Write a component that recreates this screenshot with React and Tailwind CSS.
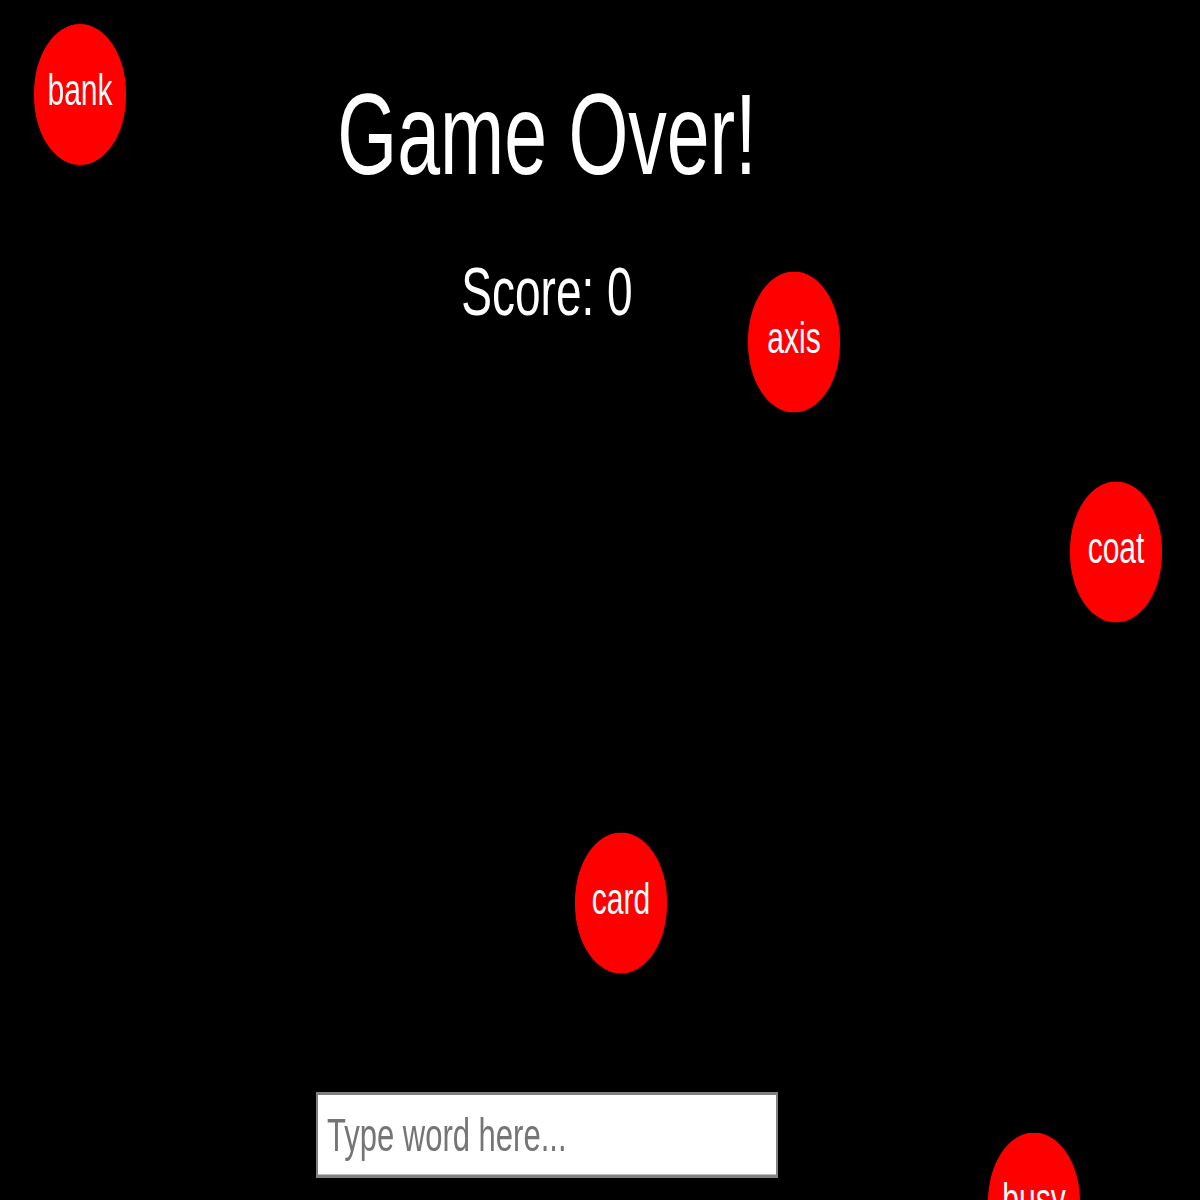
import React from "react";

const bubbles = [
  { word: "bank", cls: "left-[34px] top-[16px]" },
  { word: "axis", cls: "left-[748px] top-[181px]" },
  { word: "coat", cls: "left-[1070px] top-[321px]" },
  { word: "card", cls: "left-[575px] top-[555px]" },
  { word: "busy", cls: "left-[988px] top-[755px]" },
];

export default function App() {
  return (
    <div className="w-[1200px] h-[1200px] overflow-hidden bg-black font-['Liberation_Sans',Arial,sans-serif]">
      <div className="relative w-[1200px] h-[800px] origin-top scale-y-150">
        <div className="flex w-[1094px] flex-col items-center">
          <h1 className="mt-[45px] text-[77px] leading-[88px] font-normal text-white">Game Over!</h1>
          <p className="mt-[35px] text-[46px] leading-[52px] text-white">Score: 0</p>
          <input
            type="text"
            placeholder="Type word here..."
            className="mt-[508px] h-[57px] w-[462px] border-2 border-[#808080] bg-white px-[9px] text-[31px] text-black outline-none placeholder:text-[#757575]"
          />
        </div>
        {bubbles.map((b) => (
          <div
            key={b.word}
            className={`absolute ${b.cls} flex h-[94px] w-[92px] items-center justify-center rounded-full bg-[#ff0000] pb-[7px] text-[30px] text-white`}
          >
            {b.word}
          </div>
        ))}
      </div>
    </div>
  );
}
